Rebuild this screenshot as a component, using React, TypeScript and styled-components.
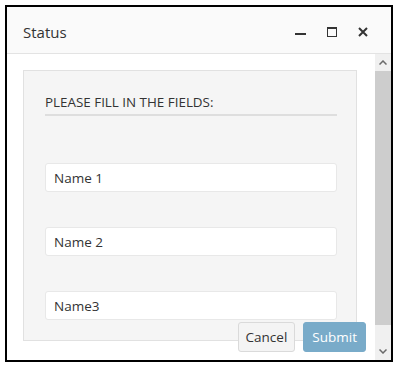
import React from 'react'
import styled, { createGlobalStyle } from 'styled-components'

const GlobalStyle = createGlobalStyle`
  html, body {
    margin: 0;
    padding: 0;
    background: #ffffff;
    font-family: "Open Sans", "Noto Sans", sans-serif;
  }
`

const Window = styled.div`
  box-sizing: border-box;
  margin: 5px;
  width: 388px;
  height: 357px;
  border: 2px solid #000;
  display: flex;
  flex-direction: column;
  background: #fff;
  position: relative;
`

const TitleBar = styled.div`
  box-sizing: border-box;
  height: 47px;
  flex-shrink: 0;
  display: flex;
  align-items: center;
  padding: 4px 16px 0 16px;
  background: #fafafa;
  border-bottom: 1px solid #e3e3e3;
`

const Title = styled.div`
  flex: 1;
  font-size: 15px;
  color: #333;
`

const TitleButtons = styled.div`
  display: flex;
  align-items: center;
  gap: 20px;
  margin-right: 7px;
`

const IconButton = styled.span`
  width: 11px;
  height: 11px;
  display: flex;
  align-items: center;
  justify-content: center;
  color: #333;
`

const Body = styled.div`
  flex: 1;
  display: flex;
  min-height: 0;
`

const Main = styled.div`
  flex: 1;
  padding: 16px 18px 0 16px;
  overflow: hidden;
`

const Panel = styled.div`
  box-sizing: border-box;
  height: 271px;
  background: #f5f5f5;
  border: 1px solid #e1e1e1;
  padding: 22px 19px 0 21px;
`

const Heading = styled.div`
  font-size: 13.4px;
  color: #333;
  padding-bottom: 3px;
  border-bottom: 2px solid #dedede;
`

const Fields = styled.div`
  display: flex;
  flex-direction: column;
  gap: 35px;
  margin-top: 47px;
`

const Input = styled.input`
  box-sizing: border-box;
  width: 100%;
  height: 29px;
  border: 1px solid #e8e8e8;
  border-radius: 3px;
  background: #fff;
  padding: 0 8px;
  font-family: inherit;
  font-size: 13.5px;
  color: #333;
  outline: none;
`

const Scrollbar = styled.div`
  width: 16px;
  display: flex;
  flex-direction: column;
  background: #f0f0f0;
`

const Arrow = styled.div`
  height: 17px;
  display: flex;
  align-items: center;
  justify-content: center;
  color: #6a6a6a;
`

const Thumb = styled.div`
  flex: 1;
  background: #cdcdcd;
  margin-bottom: 18px;
`

const Footer = styled.div`
  position: absolute;
  right: 25px;
  bottom: 8px;
  display: flex;
  gap: 8px;
`

const Button = styled.button<{ primary?: boolean }>`
  box-sizing: border-box;
  height: 30px;
  padding: 0 ${({ primary }) => (primary ? '8px' : '7px')};
  border-radius: 3px;
  font-family: inherit;
  font-size: 13.5px;
  border: 1px solid ${({ primary }) => (primary ? '#79abc9' : '#dadada')};
  background: ${({ primary }) => (primary ? '#79abc9' : '#f4f4f4')};
  color: ${({ primary }) => (primary ? '#ffffff' : '#333')};
`

const fields = ['Name 1', 'Name 2', 'Name3']

const App = () => {
  return (
    <>
      <GlobalStyle />
      <Window>
        <TitleBar>
          <Title>Status</Title>
          <TitleButtons>
            <IconButton>
              <svg width="11" height="11" viewBox="0 0 11 11">
                <rect x="0" y="6" width="11" height="2" fill="currentColor" />
              </svg>
            </IconButton>
            <IconButton>
              <svg width="10" height="10" viewBox="0 0 10 10">
                <rect x="0.5" y="0.5" width="9" height="9" fill="none" stroke="currentColor" />
                <rect x="0" y="0" width="10" height="2" fill="currentColor" />
              </svg>
            </IconButton>
            <IconButton>
              <svg width="10" height="10" viewBox="0 0 10 10">
                <path d="M1 1 L9 9 M9 1 L1 9" stroke="currentColor" strokeWidth="2" />
              </svg>
            </IconButton>
          </TitleButtons>
        </TitleBar>
        <Body>
          <Main>
            <Panel>
              <Heading>PLEASE FILL IN THE FIELDS:</Heading>
              <Fields>
                {fields.map((f) => (
                  <Input key={f} defaultValue={f} />
                ))}
              </Fields>
            </Panel>
          </Main>
          <Scrollbar>
            <Arrow>
              <svg width="8" height="5" viewBox="0 0 8 5">
                <path d="M0.5 4.5 L4 1 L7.5 4.5" fill="none" stroke="currentColor" strokeWidth="1.5" />
              </svg>
            </Arrow>
            <Thumb />
            <Arrow>
              <svg width="8" height="5" viewBox="0 0 8 5">
                <path d="M0.5 0.5 L4 4 L7.5 0.5" fill="none" stroke="currentColor" strokeWidth="1.5" />
              </svg>
            </Arrow>
          </Scrollbar>
        </Body>
        <Footer>
          <Button>Cancel</Button>
          <Button primary>Submit</Button>
        </Footer>
      </Window>
    </>
  )
}

export default App
